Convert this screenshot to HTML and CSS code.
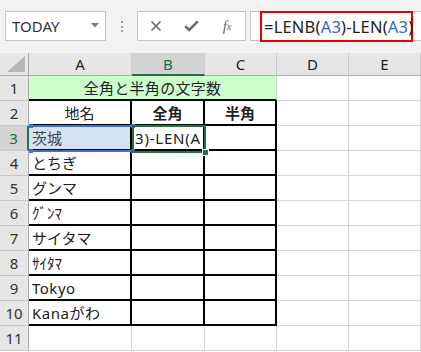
FILE: index.html
```html
<!DOCTYPE html>
<html lang="ja">
<head>
    <meta charset="UTF-8">
    <title>全角と半角の文字数</title>
    <link rel="stylesheet" href="styles.css">
</head>
<body>
    <div class="toolbar">
        <div class="namebox">
            <span class="name">TODAY</span>
            <svg class="dd" width="8" height="5" viewBox="0 0 8 5"><path d="M0 0H8L4 4.5Z" fill="#7d7d7d"/></svg>
        </div>
        <div class="grip"><i></i><i></i><i></i></div>
        <div class="fbtns">
            <span class="fbtn">
                <svg width="12" height="12" viewBox="0 0 12 12"><path d="M1.5 1.5L10.5 10.5M10.5 1.5L1.5 10.5" stroke="#6b6b6b" stroke-width="1.6" fill="none"/></svg>
            </span>
            <span class="fbtn">
                <svg width="15" height="12" viewBox="0 0 15 12"><path d="M1.2 6.2L5.2 10L13.8 1.4" stroke="#6b6b6b" stroke-width="2.6" fill="none"/></svg>
            </span>
            <span class="fbtn fx">f<sub>x</sub></span>
        </div>
        <div class="formula">
            <div class="edit">=LENB(<span class="ref">A3</span>)-LEN(<span class="ref">A3</span>)<i class="caret"></i></div>
        </div>
    </div>

    <div class="sheet">
        <div class="grid">
            <div class="corner"><svg width="18" height="16" viewBox="0 0 18 16"><path d="M18 0V16H0Z" fill="#b8b8b8"/></svg></div>
            <div class="colhead">A</div>
            <div class="colhead on">B</div>
            <div class="colhead">C</div>
            <div class="colhead">D</div>
            <div class="colhead">E</div>

            <div class="rowhead">1</div>
            <div class="cell title">全角と半角の文字数</div>
            <div class="cell"></div>
            <div class="cell"></div>

            <div class="rowhead">2</div>
            <div class="cell box center">地名</div>
            <div class="cell box center bold">全角</div>
            <div class="cell box center bold">半角</div>
            <div class="cell"></div>
            <div class="cell"></div>

            <div class="rowhead on">3</div>
            <div class="cell box picked">茨城</div>
            <div class="cell box"><span class="editing">3)-LEN(A</span></div>
            <div class="cell box"></div>
            <div class="cell"></div>
            <div class="cell"></div>

            <div class="rowhead">4</div>
            <div class="cell box">とちぎ</div>
            <div class="cell box"></div>
            <div class="cell box"></div>
            <div class="cell"></div>
            <div class="cell"></div>

            <div class="rowhead">5</div>
            <div class="cell box">グンマ</div>
            <div class="cell box"></div>
            <div class="cell box"></div>
            <div class="cell"></div>
            <div class="cell"></div>

            <div class="rowhead">6</div>
            <div class="cell box">ｸﾞﾝﾏ</div>
            <div class="cell box"></div>
            <div class="cell box"></div>
            <div class="cell"></div>
            <div class="cell"></div>

            <div class="rowhead">7</div>
            <div class="cell box">サイタマ</div>
            <div class="cell box"></div>
            <div class="cell box"></div>
            <div class="cell"></div>
            <div class="cell"></div>

            <div class="rowhead">8</div>
            <div class="cell box">ｻｲﾀﾏ</div>
            <div class="cell box"></div>
            <div class="cell box"></div>
            <div class="cell"></div>
            <div class="cell"></div>

            <div class="rowhead">9</div>
            <div class="cell box latin">Tokyo</div>
            <div class="cell box"></div>
            <div class="cell box"></div>
            <div class="cell"></div>
            <div class="cell"></div>

            <div class="rowhead">10</div>
            <div class="cell box latin">Kanaがわ</div>
            <div class="cell box"></div>
            <div class="cell box"></div>
            <div class="cell"></div>
            <div class="cell"></div>

            <div class="rowhead">11</div>
            <div class="cell"></div>
            <div class="cell"></div>
            <div class="cell"></div>
            <div class="cell"></div>
            <div class="cell"></div>
        </div>

        <div class="refbox">
            <i class="h tl"></i><i class="h tr"></i><i class="h bl"></i><i class="h br"></i>
        </div>
        <div class="active"><i class="fill"></i></div>
    </div>
</body>
</html>
```

FILE: styles.css
```css
body {
    margin: 0;
    width: 421px;
    height: 352px;
    overflow: hidden;
    background-color: #ffffff;
    font-family: "Noto Sans", "Noto Sans CJK JP", sans-serif;
    color: #222;
}
.toolbar {
    display: flex;
    align-items: flex-start;
    height: 53px;
    box-sizing: border-box;
    padding: 11px 0 0 5px;
    background-color: #f2f2f2;
}
.namebox {
    display: flex;
    align-items: center;
    justify-content: space-between;
    width: 101px;
    height: 30px;
    box-sizing: border-box;
    padding: 0 6px 0 6px;
    background-color: #fff;
    border: 1px solid #c6c6c6;
}
.name {
    font-size: 15px;
    color: #333;
}
.dd {
    margin-top: -2px;
}
.grip {
    display: flex;
    flex-direction: column;
    gap: 2.5px;
    width: 31px;
    align-items: center;
    padding-top: 10px;
}
.grip i {
    width: 2px;
    height: 2px;
    background-color: #a2a2a2;
}
.fbtns {
    display: flex;
    width: 109px;
    height: 30px;
    box-sizing: border-box;
    background-color: #fff;
    border: 1px solid #c6c6c6;
}
.fbtn {
    flex: 1;
    display: flex;
    align-items: center;
    justify-content: center;
}
.fx {
    font-family: "Liberation Serif", serif;
    font-style: italic;
    font-size: 15px;
    color: #6b6b6b;
}
.fx sub {
    font-size: 11px;
    vertical-align: -1px;
}
.formula {
    flex: 1;
    height: 30px;
    margin-left: 4px;
    box-sizing: border-box;
    padding-left: 9px;
    background-color: #fff;
    border: 1px solid #c6c6c6;
    border-right: none;
}
.edit {
    display: flex;
    align-items: center;
    width: 153px;
    height: 31px;
    margin-top: -1px;
    box-sizing: border-box;
    padding-left: 2px;
    border: 2px solid #e60000;
    font-size: 16.5px;
    letter-spacing: 0.2px;
    color: #222;
    white-space: pre;
}
.ref {
    color: #2f6cc4;
}
.caret {
    width: 1px;
    height: 22px;
    margin-left: 1px;
    background-color: #000;
}

.sheet {
    position: relative;
}
.grid {
    display: grid;
    grid-template-columns: 29px 103px 73px 72px 72px 72px;
    grid-template-rows: 23px repeat(11, 25px);
    font-size: 15px;
}
.grid > div {
    box-sizing: border-box;
    display: flex;
    align-items: center;
    white-space: nowrap;
    overflow: hidden;
}
.corner {
    background-color: #e6e6e6;
    border-right: 1px solid #ababab;
    border-bottom: 1px solid #ababab;
    align-items: flex-end !important;
    justify-content: flex-end;
    padding: 0 3px 3px 0;
}
.colhead {
    justify-content: center;
    background-color: #e6e6e6;
    border-right: 1px solid #c8c8c8;
    border-bottom: 1px solid #ababab;
    color: #222;
}
.colhead.on {
    background-color: #d3d3d3;
    border-bottom: 2px solid #217346;
    color: #1d6b40;
}
.rowhead {
    justify-content: center;
    background-color: #e6e6e6;
    border-right: 1px solid #ababab;
    border-bottom: 1px solid #c8c8c8;
    color: #333;
}
.rowhead.on {
    background-color: #d3d3d3;
    border-right: 2px solid #217346;
    color: #1d6b40;
}
.cell {
    padding: 0 3px;
    border-right: 1px solid #d4d4d4;
    border-bottom: 1px solid #d4d4d4;
}
.title {
    grid-column: span 3;
    justify-content: center;
    background-color: #ccffcc;
    border-bottom: 2px solid #000;
    letter-spacing: 0.3px;
}
.box {
    border-right: 2px solid #000;
    border-bottom: 2px solid #000;
}
.center {
    justify-content: center;
}
.bold {
    font-weight: bold;
}
.latin {
    letter-spacing: 0.5px;
}
.picked {
    background-color: #d5e2f5;
    color: #444;
}
.editing {
    letter-spacing: 0.8px;
}

.refbox {
    position: absolute;
    left: 30px;
    top: 72px;
    width: 102px;
    height: 27px;
    box-sizing: border-box;
    border-top: 2px solid #3b73c6;
    border-bottom: 2px solid #3b73c6;
}
.h {
    position: absolute;
    width: 4px;
    height: 4px;
    background-color: #3b73c6;
}
.tl { left: -1px; top: -3px; }
.tr { right: -3px; top: -3px; }
.bl { left: -1px; bottom: -3px; }
.br { right: -3px; bottom: -3px; }
.active {
    position: absolute;
    left: 132px;
    top: 72px;
    width: 74px;
    height: 28px;
    box-sizing: border-box;
    border: 2px solid #217346;
}
.fill {
    position: absolute;
    right: -5px;
    bottom: -5px;
    width: 5px;
    height: 5px;
    background-color: #217346;
    border: 1px solid #fff;
}
```
